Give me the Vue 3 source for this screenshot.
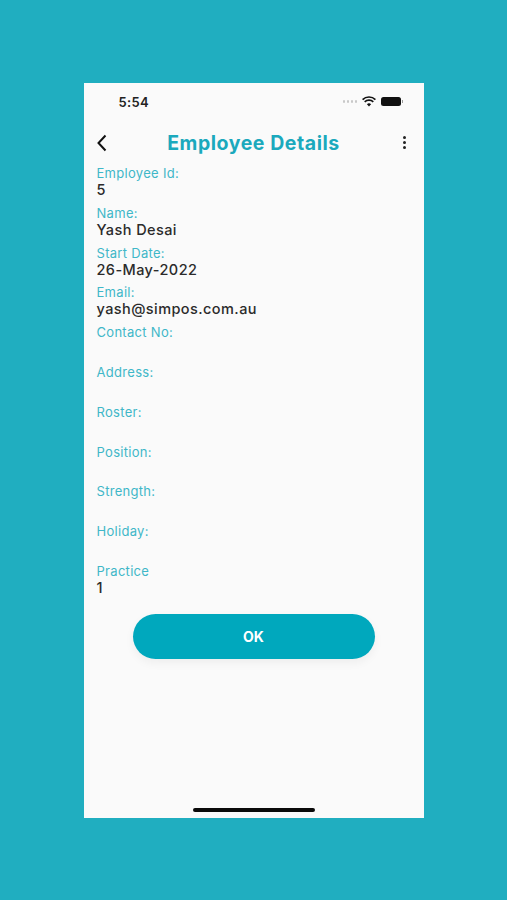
<script setup>
const fields = [
  { label: 'Employee Id:', value: '5' },
  { label: 'Name:', value: 'Yash Desai' },
  { label: 'Start Date:', value: '26-May-2022' },
  { label: 'Email:', value: 'yash@simpos.com.au' },
  { label: 'Contact No:', value: '' },
  { label: 'Address:', value: '' },
  { label: 'Roster:', value: '' },
  { label: 'Position:', value: '' },
  { label: 'Strength:', value: '' },
  { label: 'Holiday:', value: '' },
  { label: 'Practice', value: '1' },
]
</script>

<template>
  <div class="page">
    <div class="phone">
      <div class="status">
        <span class="time">5:54</span>
        <div class="status-icons">
          <span class="signal"><i></i><i></i><i></i><i></i></span>
          <svg class="wifi" width="14" height="11" viewBox="0 0 14 11">
            <path d="M7 10.6 4.9 8.2a3 3 0 0 1 4.2 0Z" fill="#111" />
            <path d="M.6 3.6a9.2 9.2 0 0 1 12.8 0M2.7 5.9a6.2 6.2 0 0 1 8.6 0" fill="none" stroke="#111" stroke-width="1.7" />
          </svg>
          <span class="battery"></span>
        </div>
      </div>
      <header class="header">
        <svg class="back" width="12" height="18" viewBox="0 0 12 18">
          <path d="M9.5 1.5 2.5 9l7 7.5" fill="none" stroke="#111" stroke-width="2" />
        </svg>
        <h1 class="title">Employee Details</h1>
        <span class="dots"><i></i><i></i><i></i></span>
      </header>
      <div class="fields">
        <div v-for="f in fields" :key="f.label" class="field">
          <div class="label">{{ f.label }}</div>
          <div class="value">{{ f.value }}</div>
        </div>
      </div>
      <button class="ok">OK</button>
      <div class="spacer"></div>
      <div class="home"></div>
    </div>
  </div>
</template>

<style>
html, body { margin: 0; background: #20aec0; }
</style>

<style scoped>
.page {
  width: 507px;
  height: 900px;
  background: #20aec0;
  display: flex;
  justify-content: center;
  padding-top: 83px;
  box-sizing: border-box;
  font-family: Inter, "Liberation Sans", sans-serif;
}
.phone {
  width: 340px;
  height: 735px;
  background: #fafafa;
  display: flex;
  flex-direction: column;
  box-sizing: border-box;
}
.status {
  height: 38px;
  display: flex;
  align-items: center;
  justify-content: space-between;
  padding: 0 22.5px 1px 35px;
  box-sizing: border-box;
}
.time { font-size: 13px; font-weight: 600; color: #222; letter-spacing: 0.3px; }
.status-icons { display: flex; align-items: center; gap: 5px; }
.signal { display: flex; gap: 1.5px; }
.signal i { width: 2.5px; height: 2.5px; background: #c8c8c8; border-radius: 50%; }
.wifi { margin-top: -1px; }
.battery {
  width: 20px;
  height: 9px;
  background: #111;
  border-radius: 2.5px;
  position: relative;
}
.battery::after {
  content: "";
  position: absolute;
  right: -2px;
  top: 3px;
  width: 1px;
  height: 3px;
  background: #999;
}
.header {
  height: 43px;
  display: grid;
  grid-template-columns: 1fr auto 1fr;
  align-items: center;
  padding: 0 17.5px;
  box-sizing: border-box;
}
.back { justify-self: start; margin-left: -5.5px; }
.dots { justify-self: end; }
.title {
  margin: 0;
  font-size: 19.5px;
  font-weight: 700;
  letter-spacing: 0.55px;
  color: #1ba9bd;
}
.dots { display: flex; flex-direction: column; gap: 2px; }
.dots i { width: 3px; height: 3px; background: #222; border-radius: 50%; }
.fields { padding: 0 13px; }
.field { height: 39.8px; }
.label { padding-top: 1px; font-size: 13px; line-height: 17px; letter-spacing: 0.3px; color: #3fb7c8; }
.value { margin-top: -1px; font-size: 14.5px; line-height: 17px; font-weight: 500; letter-spacing: 0.42px; color: #2b2b2b; height: 17px; }
.ok {
  display: block;
  align-self: center;
  width: 242px;
  height: 45px;
  margin-top: 12px;
  border: none;
  border-radius: 23px;
  background: #00a8bd;
  color: #fff;
  font-family: inherit;
  font-size: 14px;
  font-weight: 700;
  box-shadow: 0 4px 10px rgba(0, 0, 0, 0.05);
}
.spacer { flex: 1; }
.home {
  width: 122px;
  height: 4px;
  margin: 0 auto 6px;
  background: #0a0a0a;
  border-radius: 2px;
}
</style>
